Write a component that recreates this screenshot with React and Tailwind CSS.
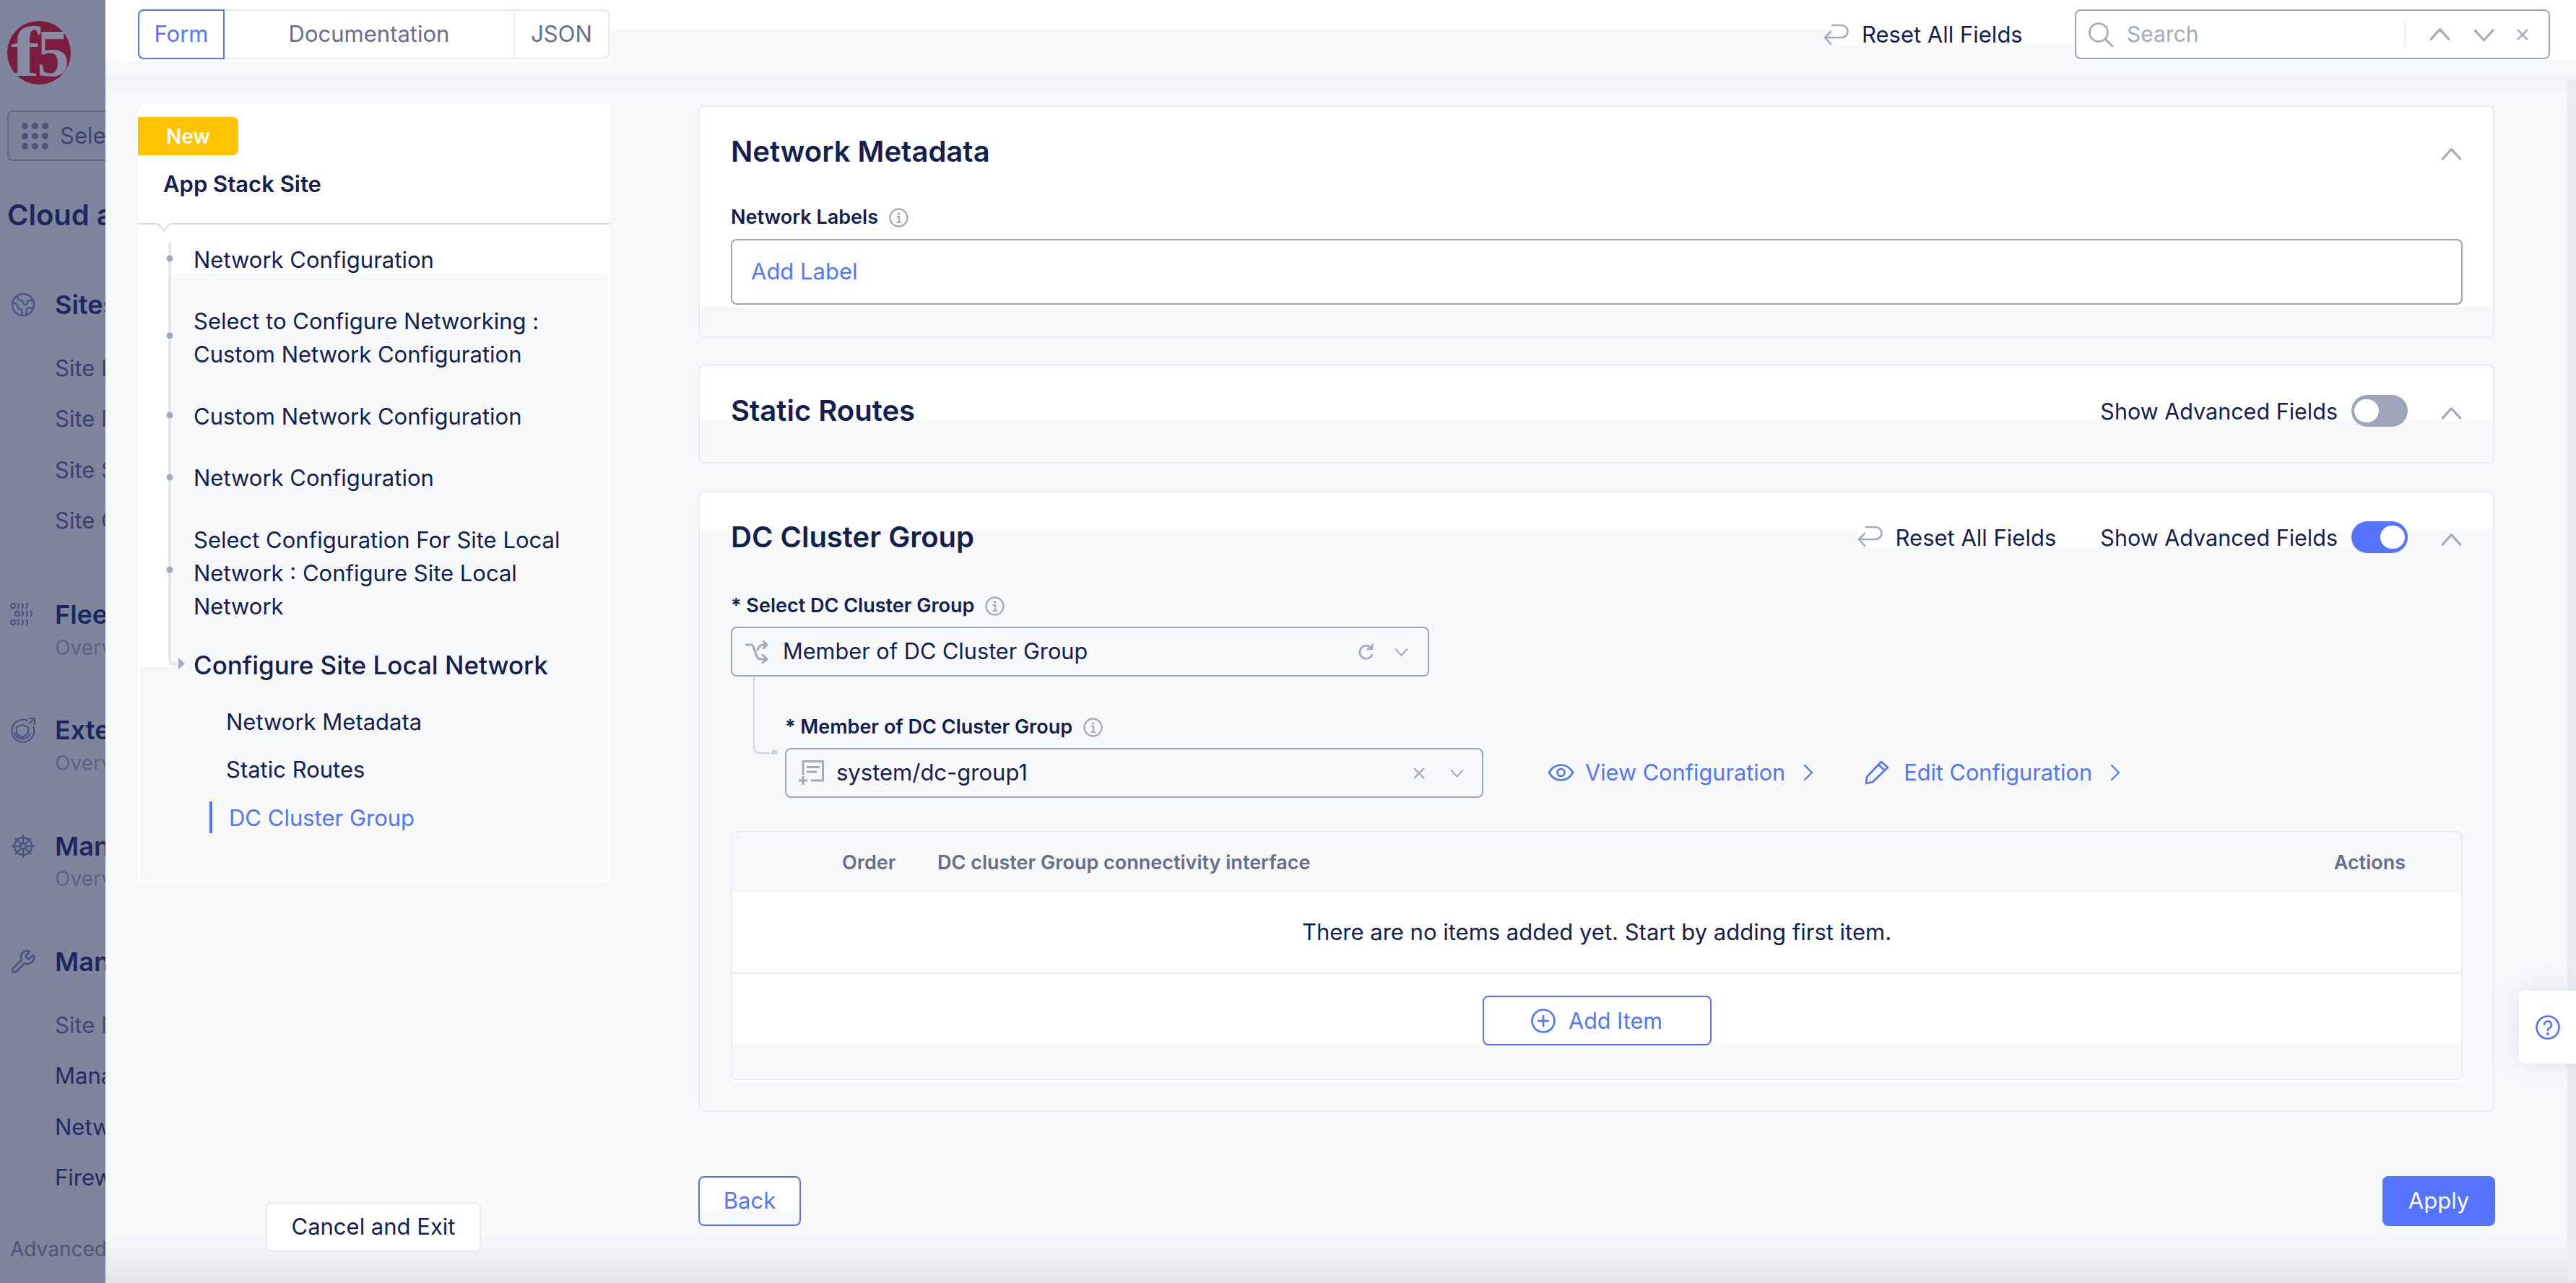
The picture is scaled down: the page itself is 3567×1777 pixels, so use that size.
import React from "react";
import { ShipWheel, Wrench, Earth } from "lucide-react";

const Chev = ({ dir = "up", size = 33, color = "#a4a9bb", sw = 2.2 }) => (
  <svg width={size} height={size} viewBox="0 0 24 24" fill="none" stroke={color} strokeWidth={sw} strokeLinecap="round" strokeLinejoin="round" className="shrink-0">
    {dir === "up" && <path d="M3 17 L12 7 L21 17" />}
    {dir === "down" && <path d="M3 8 L12 18 L21 8" />}
    {dir === "right" && <path d="M7 2 L17 12 L7 22" />}
  </svg>
);

const Close = ({ size = 18, color = "#a4a9bb" }) => (
  <svg width={size} height={size} viewBox="0 0 20 20" fill="none" stroke={color} strokeWidth="2.6" strokeLinecap="round" className="shrink-0">
    <path d="M3 3 L17 17 M17 3 L3 17" />
  </svg>
);

const ResetIcon = () => (
  <svg width="36" height="30" viewBox="0 0 36 30" fill="none" stroke="#a4a9bb" strokeWidth="2.6" strokeLinecap="round" strokeLinejoin="round" className="shrink-0">
    <path d="M12 2 H25 a8.5 8.5 0 0 1 0 17 H2" />
    <path d="M10 11 L2 19 L10 28" />
  </svg>
);

const Info = () => (
  <svg width="27" height="27" viewBox="0 0 27 27" fill="none" className="shrink-0">
    <circle cx="13.5" cy="13.5" r="12" stroke="#a4a9bb" strokeWidth="2.4" />
    <circle cx="13.5" cy="8" r="1.8" fill="#a4a9bb" />
    <path d="M11 12 H14 V19 M10.5 20 H17" stroke="#a4a9bb" strokeWidth="2.2" />
  </svg>
);

const Toggle = ({ on }) => (
  <div className={on ? "w-[78px] h-[44px] rounded-full bg-[#5474ff] flex items-center justify-end px-[4px] shrink-0" : "w-[78px] h-[44px] rounded-full bg-[#9ea5b8] flex items-center justify-start px-[4px] shrink-0"}>
    <div className="w-[34px] h-[32px] rounded-full bg-white" />
  </div>
);

const SideHead = ({ icon, text, mt }) => (
  <div className={`flex items-center h-[44px] ${mt}`}>
    <div className="w-[66px] pl-[4px] shrink-0 text-[#4a5480]">{icon}</div>
    <span className="text-[36px] font-semibold text-[#1b2860]">{text}</span>
  </div>
);

const SideSub = ({ text, mt, tone = "text-[#34406f]" }) => (
  <div className={`flex items-center h-[44px] pl-[66px] text-[31px] ${tone} ${mt}`}>{text}</div>
);

const SideOver = ({ mt }) => (
  <div className={`flex items-center h-[44px] pl-[66px] text-[28px] text-[#5a6288] ${mt}`}>Overview</div>
);

const FleetRow = ({ x, y }) => (
  <g transform={`translate(${x} ${y})`}>
    <circle cx="4" cy="0" r="3.2" />
    <path d="M10 -4 q4 4 0 8 M16 -4 q4 4 0 8 M22 -4 q4 4 0 8" />
  </g>
);

const Sidebar = () => (
  <aside className="w-[146px] shrink-0 h-full bg-[#80859e] overflow-hidden whitespace-nowrap pl-[10px] pt-[29px]">
    <svg width="88" height="88" viewBox="0 0 88 88" className="block">
      <circle cx="44" cy="44" r="44" fill="#7a1c3d" />
      <text x="5" y="76" textLength="40" lengthAdjust="spacingAndGlyphs" fontFamily="'Liberation Serif', serif" fontWeight="700" fontSize="98" fill="#868aa2">f</text>
      <text x="41" y="76" textLength="45" lengthAdjust="spacingAndGlyphs" fontFamily="'Liberation Serif', serif" fontWeight="700" fontSize="94" fill="#868aa2">5</text>
    </svg>
    <div className="mt-[36px] w-[300px] h-[70px] border-2 border-[#5f6788] rounded-lg bg-[#7d829b] flex items-center pl-[18px] gap-[16px]">
      <div className="grid grid-cols-3 gap-x-[5px] gap-y-[5px] shrink-0">
        {Array.from({ length: 9 }).map((_, i) => (
          <div key={i} className="w-[9px] h-[9px] rounded-full bg-[#4b5479]" />
        ))}
      </div>
      <span className="text-[31px] text-[#39436f]">Select Service</span>
    </div>
    <div className="mt-[53px] h-[44px] flex items-center text-[40px] font-semibold text-[#1b2860]">Cloud and Edge Sites</div>
    <SideHead mt="mt-[80px]" text="Sites" icon={<Earth size={36} strokeWidth={1.6} />} />
    <SideSub mt="mt-[44px]" text="Site List" />
    <SideSub mt="mt-[26px]" text="Site Mesh" />
    <SideSub mt="mt-[27px]" text="Site Security" />
    <SideSub mt="mt-[26px]" text="Site Connectivity" />
    <SideHead mt="mt-[86px]" text="Fleet Management" icon={
      <svg width="36" height="34" viewBox="0 0 36 34" fill="none" stroke="currentColor" strokeWidth="2.2">
        <FleetRow x={0} y={5} />
        <FleetRow x={6} y={16} />
        <FleetRow x={0} y={28} />
      </svg>
    } />
    <SideOver mt="mt-[2px]" />
    <SideHead mt="mt-[70px]" text="External Connectivity" icon={
      <svg width="36" height="36" viewBox="0 0 36 36" fill="none" stroke="currentColor" strokeWidth="2.2">
        <path d="M24 5 A15.5 15.5 0 1 0 32 13" />
        <path d="M25 2 H34 V11 M34 2 L26 10" />
        <path d="M17 11 L25 14 V20 Q25 25 17 28 Q9 25 9 20 V14 Z" />
        <path d="M6 21 A11.5 11.5 0 0 0 28 23" />
      </svg>
    } />
    <SideOver mt="mt-[2px]" />
    <SideHead mt="mt-[71px]" text="Manage Kubernetes" icon={<ShipWheel size={36} strokeWidth={1.6} />} />
    <SideOver mt="mt-[1px]" />
    <SideHead mt="mt-[71px]" text="Manage" icon={<Wrench size={36} strokeWidth={1.8} />} />
    <SideSub mt="mt-[44px]" text="Site Management" tone="text-[#3d4877]" />
    <SideSub mt="mt-[26px]" text="Manage Sites" tone="text-[#1f2c63]" />
    <SideSub mt="mt-[27px]" text="Networking" tone="text-[#1f2c63]" />
    <SideSub mt="mt-[26px]" text="Firewall" tone="text-[#1f2c63]" />
    <div className="mt-[55px] pl-[4px] h-[44px] flex items-center text-[28px] text-[#4c5478]">Advanced</div>
  </aside>
);

const Timeline = () => (
  <svg width="60" height="613" viewBox="0 0 60 613" fill="none" className="block overflow-visible relative z-10">
    <path d="M28 -2 L44 -2 L36 9 Z" fill="#ffffff" />
    <path d="M28 -1 L36 9 L44 -1" stroke="#d4d8e5" strokeWidth="2" />
    <path d="M44 25 V604 Q44 608 48 608 H54" stroke="#e5e8f2" strokeWidth="4" />
    {[47, 154, 264, 350, 478].map((y) => (
      <circle key={y} cx="44" cy={y} r="4.5" fill="#a4aabf" />
    ))}
    <path d="M56 600 L65 608 L56 616 Z" fill="#a4aabf" />
  </svg>
);

const NavText = ({ mt, children }) => (
  <div className={`${mt} text-[31px] leading-[46px]`}>{children}</div>
);

const LeftPanel = () => (
  <div className="w-[698px] shrink-0 pl-[45px] pt-[59px] flex flex-col items-start">
    <div className="w-[653px] h-[1078px] rounded-lg border-2 border-white flex flex-col">
      <div className="h-[167px] shrink-0 bg-white rounded-t-lg border-b-2 border-[#d4d8e5] -mx-[2px] -mt-[2px] pt-[18px]">
        <div className="w-[139px] h-[53px] bg-[#ffc400] rounded-r-lg flex items-center justify-center text-white font-semibold text-[28px]">New</div>
        <div className="pl-[35px] mt-[17px] text-[31px] leading-[46px] font-semibold">App Stack Site</div>
      </div>
      <div className="flex flex-1 -ml-[2px]">
        <div className="w-[47px] h-[613px] bg-white shrink-0">
          <Timeline />
        </div>
        <div className="flex-1 pl-[30px] pt-[26px] bg-[linear-gradient(#ffffff_67px,transparent_67px)]">
          <NavText mt="">Network Configuration</NavText>
          <NavText mt="mt-[39px]">Select to Configure Networking :<br />Custom Network Configuration</NavText>
          <NavText mt="mt-[40px]">Custom Network Configuration</NavText>
          <NavText mt="mt-[39px]">Network Configuration</NavText>
          <NavText mt="mt-[40px]">Select Configuration For Site Local<br />Network : Configure Site Local<br />Network</NavText>
          <div className="mt-[35px] text-[35px] leading-[46px] font-medium">Configure Site Local Network</div>
          <div className="mt-[33px] pl-[45px] text-[31px] leading-[46px]">Network Metadata</div>
          <div className="mt-[20px] pl-[45px] text-[31px] leading-[46px]">Static Routes</div>
          <div className="mt-[21px] ml-[22px] pl-[23px] h-[44px] border-l-[4px] border-[#5474ff] text-[31px] leading-[46px] text-[#5474ff]">DC Cluster Group</div>
        </div>
      </div>
    </div>
    <button className="mt-[443px] ml-[177px] w-[298px] h-[69px] bg-white border-2 border-[#e8eaf3] rounded-lg text-[31px] text-[#131e51]">Cancel and Exit</button>
  </div>
);

const Label = ({ text, mt }) => (
  <div className={`flex items-center h-[30px] gap-[15px] ${mt}`}>
    <span className="text-[27px] font-semibold">{text}</span>
    <Info />
  </div>
);

const Card3 = () => (
  <section className="h-[860px] mt-[38px] rounded-lg border-2 border-[#e9ecf4] bg-[linear-gradient(#ffffff_51px,transparent_51px)] pt-[40px] pl-[43px] pr-[42px]">
    <div className="flex items-start h-[44px]">
      <h2 className="flex-1 text-[40px] leading-[44px] font-semibold">DC Cluster Group</h2>
      <div className="bg-white h-[36px] flex items-start">
        <div className="mt-[6px]"><ResetIcon /></div>
        <span className="ml-[17px] text-[31px] leading-[46px]">Reset All Fields</span>
        <span className="ml-[61px] mr-[19px] text-[30.5px] leading-[46px]">Show Advanced Fields</span>
      </div>
      <Toggle on />
      <div className="ml-[44px] -mr-[1px] mt-[9px]"><Chev /></div>
    </div>
    <Label mt="mt-[58px]" text="* Select DC Cluster Group" />
    <div className="mt-[14px] w-[967px] h-[69px] border-2 border-[#9ea5b8] rounded-lg flex items-center pl-[18px] pr-[26px]">
      <svg width="32" height="32" viewBox="0 0 32 32" fill="none" stroke="#a4a9bb" strokeWidth="3" strokeLinecap="round" strokeLinejoin="round" className="shrink-0">
        <path d="M1 6 H8 C14 6 13 26 21 26 H30" />
        <path d="M24 20 L30 26 L24 31" />
        <path d="M17 13 C19 8 21 6 25 6 H30" />
        <path d="M25 1 L30 6 L25 11" />
      </svg>
      <span className="ml-[20px] flex-1 text-[30.7px]">Member of DC Cluster Group</span>
      <svg width="24" height="24" viewBox="0 0 24 24" fill="none" stroke="#a4a9bb" strokeWidth="2.6" strokeLinecap="round" className="shrink-0">
        <path d="M19 7 A9 9 0 1 0 20 16" />
        <path d="M20 2 V8 H14" />
      </svg>
      <div className="ml-[26px]"><Chev dir="down" size={21} /></div>
    </div>
    <div className="flex">
      <div className="w-[75px] shrink-0">
        <svg width="75" height="108" viewBox="0 0 75 108" fill="none" className="block">
          <path d="M32 0 V98 Q32 106 40 106 H54" stroke="#d0d4e0" strokeWidth="2" />
          <circle cx="60" cy="106" r="4.5" fill="#cdd2e0" />
        </svg>
      </div>
      <div className="flex-1">
        <Label mt="mt-[55px]" text="* Member of DC Cluster Group" />
        <div className="mt-[14px] flex items-center">
          <div className="w-[967px] h-[69px] border-2 border-[#9ea5b8] rounded-lg flex items-center pl-[17px] pr-[24px] shrink-0">
            <svg width="35" height="35" viewBox="0 0 35 35" fill="none" stroke="#a4a9bb" strokeWidth="3" className="shrink-0">
              <path d="M6 20 V1.5 H33.5 V28 H17" />
              <path d="M11 9.5 H29 M11 16 H25" />
              <path d="M0 28 H12 M6 22 V34" />
            </svg>
            <span className="ml-[17px] flex-1 text-[31px]">system/dc-group1</span>
            <Close />
            <div className="ml-[33px]"><Chev dir="down" size={21} /></div>
          </div>
          <div className="ml-[89px] flex items-center text-[#5474ff] text-[30.7px]">
            <svg width="37" height="26" viewBox="0 0 37 26" fill="none" stroke="#5474ff" strokeWidth="2.6" className="shrink-0">
              <path d="M2 13 C10 -1 27 -1 35 13 C27 27 10 27 2 13 Z" />
              <circle cx="18.5" cy="13" r="5" />
            </svg>
            <span className="ml-[15px]">View Configuration</span>
            <div className="ml-[20px]"><Chev dir="right" size={24} color="#5474ff" /></div>
            <svg width="36" height="36" viewBox="0 0 36 36" fill="none" stroke="#5474ff" strokeWidth="2.6" strokeLinejoin="round" className="ml-[65px] shrink-0">
              <path d="M3 33 L4 24 L24 3 L33 11 L12 31 Z M20 7 L29 15" />
            </svg>
            <span className="ml-[19px]">Edit Configuration</span>
            <div className="ml-[20px]"><Chev dir="right" size={24} color="#5474ff" /></div>
          </div>
        </div>
      </div>
    </div>
    <div className="mt-[46px] h-[345px] rounded-lg border-2 border-[#e9ecf4] shadow-[0_3px_0_#ffffff] flex flex-col">
      <div className="h-[83px] shrink-0 flex items-center pt-[2px] text-[27px] font-semibold text-[#666e8c]">
        <span className="ml-[152px] w-[132px]">Order</span>
        <span className="flex-1">DC cluster Group connectivity interface</span>
        <span className="mr-[77px]">Actions</span>
      </div>
      <div className="h-[113px] shrink-0 bg-white border-b-2 border-[#e6eaf3] flex items-center justify-center text-[31px]">
        There are no items added yet. Start by adding first item.
      </div>
      <div className="h-[98px] shrink-0 bg-white pt-[30px] flex justify-center">
        <button className="w-[317px] h-[69px] shrink-0 bg-white border-2 border-[#5474ff] rounded-lg flex items-center justify-center gap-[18px] text-[30.5px] text-[#5474ff]">
          <svg width="34" height="34" viewBox="0 0 34 34" fill="none" stroke="#5474ff" strokeWidth="2.6" className="shrink-0">
            <circle cx="17" cy="17" r="15.5" />
            <path d="M17 9 V25 M9 17 H25" />
          </svg>
          Add Item
        </button>
      </div>
    </div>
  </section>
);

const Main = () => (
  <div className="w-[2488px] ml-[123px] pt-[61px]">
    <div className="w-[2487px]">
      <section className="h-[322px] rounded-lg border-2 border-[#e9ecf4] bg-[linear-gradient(#ffffff_277px,transparent_277px)] pt-[40px] pl-[43px] pr-[42px]">
        <div className="flex items-center h-[44px]">
          <h2 className="flex-1 text-[40px] leading-[44px] font-semibold">Network Metadata</h2>
          <div className="-mr-[1px] mt-[6px]"><Chev /></div>
        </div>
        <Label mt="mt-[54px]" text="Network Labels" />
        <div className="mt-[15px] h-[91px] rounded-lg border-2 border-[#9ea5b8] bg-[linear-gradient(#ffffff_56px,transparent_56px)] pl-[26px] pt-[20px] text-[31px] leading-[46px] text-[#5876fb]">Add Label</div>
      </section>
      <section className="h-[137px] mt-[37px] rounded-lg border-2 border-[#e9ecf4] bg-[linear-gradient(#ffffff_76px,transparent_76px)] pt-[40px] pl-[43px] pr-[42px]">
        <div className="flex items-center h-[44px]">
          <h2 className="flex-1 text-[40px] leading-[44px] font-semibold">Static Routes</h2>
          <span className="mr-[19px] mt-[2px] text-[30.5px]">Show Advanced Fields</span>
          <Toggle />
          <div className="ml-[44px] -mr-[1px] mt-[6px]"><Chev /></div>
        </div>
      </section>
      <Card3 />
    </div>
    <div className="mt-[89px] flex justify-between">
      <button className="w-[142px] h-[69px] border-2 border-[#5474ff] rounded-lg bg-[linear-gradient(#ffffff_46px,transparent_46px)] text-[31px] text-[#5474ff]">Back</button>
      <button className="w-[156px] h-[69px] rounded-lg bg-[#5474ff] text-[31px] text-white">Apply</button>
    </div>
  </div>
);

const Header = () => (
  <header className="flex items-start h-[85px]">
    <div className="w-[698px] h-[85px] bg-white shrink-0 pl-[45px] pt-[13px]">
      <div className="w-[653px] h-[69px] rounded-lg border-2 border-[#e8eaf3] flex text-[31px] text-[#666e8c]">
        <div className="w-[120px] -m-[2px] h-[69px] mr-0 border-2 border-[#5474ff] rounded-l-lg flex items-center justify-center text-[#5474ff]">Form</div>
        <div className="flex-1 flex items-center justify-center">Documentation</div>
        <div className="w-[131px] border-l-2 border-[#e8eaf3] flex items-center justify-center">JSON</div>
      </div>
    </div>
    <div className="flex-1 h-[40px] bg-white" />
    <div className="w-[335px] h-[62px] bg-white shrink-0 flex items-center pt-[34px]">
      <div className="-ml-[16px]"><ResetIcon /></div>
      <span className="ml-[17px] text-[31px]">Reset All Fields</span>
    </div>
    <div className="w-[691px] h-[83px] bg-white shrink-0 pt-[13px]">
      <div className="-ml-[3px] w-[658px] h-[69px] rounded-lg border-2 border-[#9ea5b8] flex items-center pl-[16px]">
        <svg width="36" height="36" viewBox="0 0 36 36" fill="none" stroke="#a4a9bb" strokeWidth="2.6" strokeLinecap="round" className="shrink-0">
          <circle cx="15" cy="15" r="12.5" />
          <path d="M24 24 L34 34" />
        </svg>
        <span className="ml-[18px] w-[384px] text-[30px] text-[#a4a9bb]">Search</span>
        <div className="w-[2px] h-[35px] bg-[#e8eaf3] shrink-0" />
        <div className="ml-[31px]"><Chev /></div>
        <div className="ml-[28px]"><Chev dir="down" /></div>
        <div className="ml-[28px]"><Close /></div>
      </div>
    </div>
  </header>
);

export default function App() {
  return (
    <div className="w-[3567px] h-screen overflow-hidden flex font-[family-name:Inter,sans-serif] text-[#131e51]">
      <Sidebar />
      <div className="relative flex-1 h-full overflow-hidden bg-[linear-gradient(#f7f8fa_103px,#f3f4f7_103px,#f7f8fa_150px,#f7f8fa_1710px,#e3e5e9_1777px)]">
        <Header />
        <div className="flex">
          <LeftPanel />
          <Main />
        </div>
        <div className="absolute right-0 top-[109px] bottom-[6px] w-[12px] rounded-t-lg bg-[#e9ecf3]" />
        <div className="absolute right-0 top-[1372px] w-[79px] h-[101px] bg-white rounded-l-lg shadow-[0_0_40px_rgba(120,130,160,0.18)] flex items-center justify-center">
          <svg width="34" height="34" viewBox="0 0 34 34" fill="none" stroke="#5474ff" strokeWidth="2.6" strokeLinecap="round">
            <circle cx="17" cy="17" r="15.5" />
            <path d="M12 13 a5 5 0 1 1 7 5 q-2 1 -2 3" />
            <circle cx="17" cy="26" r="0.8" />
          </svg>
        </div>
      </div>
    </div>
  );
}
